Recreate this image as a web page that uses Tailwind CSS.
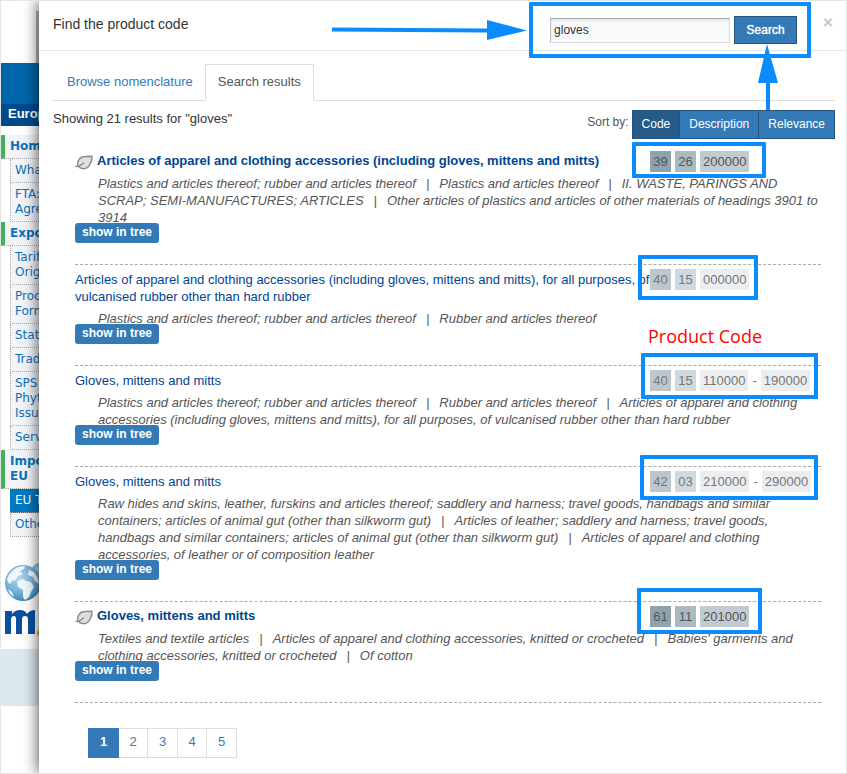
<!DOCTYPE html>
<html lang="en">
<head>
<meta charset="utf-8">
<title>Find the product code</title>
<script src="https://cdn.jsdelivr.net/npm/@tailwindcss/browser@4"></script>
</head>
<body class="bg-white font-['Liberation_Sans',Arial,sans-serif] text-[13px] leading-[17px] text-[#333]">
<div class="relative flex min-h-screen border border-[#e5e5e5] overflow-hidden">

  <!-- Site column behind the dialog -->
  <aside class="w-[38px] shrink-0 overflow-hidden whitespace-nowrap font-['DejaVu_Sans',Verdana,sans-serif] text-[12px] leading-[15px] text-[#0a72bb]">
    <div class="h-[62px] pt-[10px] flex justify-end"><div class="w-[3px] bg-[#bbb]"></div></div>
    <div class="h-[41px] bg-[#0065a8]"></div>
    <div class="h-[22px] bg-[#004a8c] pl-[7px] font-['Liberation_Sans',Arial,sans-serif] text-[13px] leading-[20px] font-bold text-white">Europ</div>
    <nav class="mt-[9px]">
      <a href="#" class="block border-l-4 border-l-[#43b05c] border-b border-b-[#aaa] [border-bottom-style:dotted] bg-[#f2f4f8] pl-[5px] py-1 font-bold">Hom</a>
      <div class="pl-[9px]">
        <a href="#" class="block border-l border-b border-dotted border-[#aaa] bg-[#f2f4f8] pl-1 py-1">Wha</a>
        <a href="#" class="block border-l border-b border-dotted border-[#aaa] bg-[#f2f4f8] pl-1 py-1">FTA:<br>Agre</a>
      </div>
      <a href="#" class="block border-l-4 border-l-[#43b05c] border-b border-b-[#aaa] [border-bottom-style:dotted] bg-[#f2f4f8] pl-[5px] py-1 font-bold">Expo</a>
      <div class="pl-[9px]">
        <a href="#" class="block border-l border-b border-dotted border-[#aaa] bg-[#f2f4f8] pl-1 py-1">Tarif<br>Orig</a>
        <a href="#" class="block border-l border-b border-dotted border-[#aaa] bg-[#f2f4f8] pl-1 py-1">Proc<br>Form</a>
        <a href="#" class="block border-l border-b border-dotted border-[#aaa] bg-[#f2f4f8] pl-1 py-1">Stat</a>
        <a href="#" class="block border-l border-b border-dotted border-[#aaa] bg-[#f2f4f8] pl-1 py-1">Trad</a>
        <a href="#" class="block border-l border-b border-dotted border-[#aaa] bg-[#f2f4f8] pl-1 py-1">SPS<br>Phyt<br>Issu</a>
        <a href="#" class="block border-l border-b border-dotted border-[#aaa] bg-[#f2f4f8] pl-1 py-1">Serv</a>
      </div>
      <a href="#" class="block border-l-4 border-l-[#43b05c] border-b border-b-[#aaa] [border-bottom-style:dotted] bg-[#f2f4f8] pl-[5px] py-1 font-bold">Impo<br>EU</a>
      <div class="pl-[9px]">
        <a href="#" class="block border-b border-dotted border-[#aaa] bg-[#0079c1] pl-[5px] py-1 text-white">EU T</a>
        <a href="#" class="block border-l border-b border-dotted border-[#aaa] bg-[#f2f4f8] pl-1 py-1">Othe</a>
      </div>
    </nav>
    <svg class="mt-[25px] block" width="38" height="76" viewBox="0 0 38 76" aria-label="Market access">
      <defs><radialGradient id="g" cx=".4" cy=".35" r=".7"><stop offset="0" stop-color="#b5d8ee"/><stop offset=".65" stop-color="#6daad4"/><stop offset="1" stop-color="#3f7fb0"/></radialGradient></defs>
      <circle cx="39" cy="10" r="9" fill="url(#g)"/>
      <circle cx="22" cy="21" r="18" fill="url(#g)"/>
      <path d="M6 17q3-8 11-12l7-1-1 3-4 2 3 3-5 2-2 4-4 1-2 3-2-2zM16 19l6-2 3 2 5 1 3 5-3 5-2 5-4 3-2-3 0-7-5-3zM28 8l5 2 4 6 1 6-4-3-2-4-5-2zM7 27l4 3 2 5-4-3z" fill="#eef7fc"/>
      <path d="M4 72V49h7v3q3-4 8-4 5 0 7 4 3-4 8-4V72h-7V57q0-3-3-3t-3 3v15h-6V57q0-3-2-3-3 0-3 4v14z" fill="#0b4ea2"/>
      <circle cx="39" cy="71" r="3" fill="#f39a1e"/>
    </svg>
    <div class="mt-[11px] h-[57px] bg-[#dce9ef]"></div>
  </aside>

  <main role="dialog" aria-labelledby="dlg" class="relative flex-1 bg-white shadow-[0_0_14px_1px_rgba(0,0,0,0.65)]">
    <header class="flex h-[50px] items-start border-b border-[#e5e5e5] pl-[14px] pr-[13px]">
      <h1 id="dlg" class="flex-1 pt-[14px] text-[14px] leading-[18px]">Find the product code</h1>
      <form class="flex items-center gap-1 pt-[15px]" onsubmit="return false">
        <input type="text" aria-label="Search term" value="gloves" class="h-[25px] w-[180px] border border-[#ddd] border-t-[#aaa] border-l-[#bbb] bg-[#f9fafc] px-[3px] text-[12px] shadow-[inset_0_2px_2px_rgba(190,205,220,0.4)]">
        <button class="h-[28px] w-[63px] border border-[#245580] bg-[#337ab7] text-[12px] text-white [text-shadow:0_0_1px_#fff]">Search</button>
      </form>
      <button aria-label="Close" class="ml-[26px] pt-[13px] text-[17px] leading-[17px] font-bold text-[#c4c4c4]">×</button>
    </header>

    <div class="pt-[13px] pl-[13px] pr-[11px]">
      <div class="flex border-b border-[#ddd]">
        <a href="#" class="h-[36px] pl-[15px] pr-3 pt-[9px] text-[#337ab7]">Browse nomenclature</a>
        <a href="#" class="-mb-px h-[37px] border border-[#ddd] border-b-white bg-white px-3 pt-[8px] text-[#555]">Search results</a>
      </div>

      <div class="mt-[9px] flex items-start">
        <p class="flex-1 pl-px">Showing 21 results for "gloves"</p>
        <span class="pt-1 pr-[3px] text-[12px] leading-[17px] text-[#555]">Sort by:</span>
        <div class="flex h-[29px] border border-[#245580] text-[12px] text-white [text-shadow:0_0_1px_#fff]">
          <button class="bg-[#265a88] px-[9px]">Code</button>
          <button class="border-l border-[#245580] bg-[#337ab7] px-[9px]">Description</button>
          <button class="border-l border-[#245580] bg-[#337ab7] px-[9px]">Relevance</button>
        </div>
      </div>

      <ul class="mt-2 pl-[23px] pr-[14px]">
        <li class="border-b border-dashed border-[#aaa] pt-1 pb-[21px]">
          <div class="flex items-start">
            <h2 class="flex flex-1 gap-1 pt-px pb-[5px] font-bold text-[#004494]">
              <svg class="mt-[3px] shrink-0" width="18" height="15" viewBox="0 0 18 15" fill="none" stroke="#8c8c8c" stroke-width="1.4" stroke-linejoin="round" stroke-linecap="round"><path d="M3 11C1.500 6 5 1.500 10 1.500L17 1.200C17 5 15.500 9.500 12.500 12.500C9.500 14.600 5.500 14 3 11Z" fill="#dedede"/><path d="M1 11.500L4.500 11L8.500 8"/></svg>
              <a href="#">Articles of apparel and clothing accessories (including gloves, mittens and mitts)</a></h2>
            <div class="flex w-[171px] gap-1 leading-[21px] text-[#555]"><span class="bg-[#8fa2ae] w-[21px] text-center">39</span><span class="bg-[#a9bac1] w-[21px] text-center">26</span><span class="bg-[#c2cbd1] px-[3px]">200000</span></div>
          </div>
          <p class="pl-[23px] italic text-[#555]">Plastics and articles thereof; rubber and articles thereof<span class="mx-2.5">|</span>Plastics and articles thereof<span class="mx-2.5">|</span>II. WASTE, PARINGS AND SCRAP; SEMI-MANUFACTURES; ARTICLES<span class="mx-2.5">|</span>Other articles of plastics and articles of other materials of headings 3901 to 3914</p>
          <button class="relative -mt-[3px] block h-[20px] w-[84px] rounded-[3px] bg-[#337ab7] pb-[2px] text-[12px] font-bold leading-[18px] text-white">show in tree</button>
        </li>
        <li class="border-b border-dashed border-[#aaa] pt-1 pb-[21px]">
          <div class="flex items-start">
            <h2 class="flex-1 pt-[2px] pb-[5px] text-[#004494]"><a href="#">Articles of apparel and clothing accessories (including gloves, mittens and mitts), for all purposes, of vulcanised rubber other than hard rubber</a></h2>
            <div class="flex w-[171px] gap-1 leading-[21px] text-[#777]"><span class="bg-[#bcc7cd] w-[21px] text-center">40</span><span class="bg-[#cfdae0] w-[21px] text-center">15</span><span class="bg-[#eaeef1] px-[3px]">000000</span></div>
          </div>
          <p class="pl-[23px] italic text-[#555]">Plastics and articles thereof; rubber and articles thereof<span class="mx-2.5">|</span>Rubber and articles thereof</p>
          <button class="relative -mt-[3px] block h-[20px] w-[84px] rounded-[3px] bg-[#337ab7] pb-[2px] text-[12px] font-bold leading-[18px] text-white">show in tree</button>
        </li>
        <li class="border-b border-dashed border-[#aaa] pt-1 pb-[21px]">
          <div class="flex items-start">
            <h2 class="flex-1 pt-[2px] pb-[5px] text-[#004494]"><a href="#">Gloves, mittens and mitts</a></h2>
            <div class="flex w-[171px] gap-1 leading-[21px] text-[#777]"><span class="bg-[#bcc7cd] w-[21px] text-center">40</span><span class="bg-[#cfdae0] w-[21px] text-center">15</span><span class="bg-[#eaeef1] px-[3px]">110000</span><span>-</span><span class="bg-[#eaeef1] px-[3px]">190000</span></div>
          </div>
          <p class="pl-[23px] italic text-[#555]">Plastics and articles thereof; rubber and articles thereof<span class="mx-2.5">|</span>Rubber and articles thereof<span class="mx-2.5">|</span>Articles of apparel and clothing accessories (including gloves, mittens and mitts), for all purposes, of vulcanised rubber other than hard rubber</p>
          <button class="relative -mt-[3px] block h-[20px] w-[84px] rounded-[3px] bg-[#337ab7] pb-[2px] text-[12px] font-bold leading-[18px] text-white">show in tree</button>
        </li>
        <li class="border-b border-dashed border-[#aaa] pt-1 pb-[21px]">
          <div class="flex items-start">
            <h2 class="flex-1 pt-[2px] pb-[5px] text-[#004494]"><a href="#">Gloves, mittens and mitts</a></h2>
            <div class="flex w-[171px] gap-1 leading-[21px] text-[#777]"><span class="bg-[#bcc7cd] w-[21px] text-center">42</span><span class="bg-[#cfdae0] w-[21px] text-center">03</span><span class="bg-[#eaeef1] px-[3px]">210000</span><span>-</span><span class="bg-[#eaeef1] px-[3px]">290000</span></div>
          </div>
          <p class="pl-[23px] italic text-[#555]">Raw hides and skins, leather, furskins and articles thereof; saddlery and harness; travel goods, handbags and similar containers; articles of animal gut (other than silkworm gut)<span class="mx-2.5">|</span>Articles of leather; saddlery and harness; travel goods, handbags and similar containers; articles of animal gut (other than silkworm gut)<span class="mx-2.5">|</span>Articles of apparel and clothing accessories, of leather or of composition leather</p>
          <button class="relative -mt-[3px] block h-[20px] w-[84px] rounded-[3px] bg-[#337ab7] pb-[2px] text-[12px] font-bold leading-[18px] text-white">show in tree</button>
        </li>
        <li class="border-b border-dashed border-[#aaa] pt-1 pb-[21px]">
          <div class="flex items-start">
            <h2 class="flex flex-1 gap-1 pt-px pb-[5px] font-bold text-[#004494]">
              <svg class="mt-[3px] shrink-0" width="18" height="15" viewBox="0 0 18 15" fill="none" stroke="#8c8c8c" stroke-width="1.4" stroke-linejoin="round" stroke-linecap="round"><path d="M3 11C1.500 6 5 1.500 10 1.500L17 1.200C17 5 15.500 9.500 12.500 12.500C9.500 14.600 5.500 14 3 11Z" fill="#dedede"/><path d="M1 11.500L4.500 11L8.500 8"/></svg>
              <a href="#">Gloves, mittens and mitts</a></h2>
            <div class="flex w-[171px] gap-1 leading-[21px] text-[#555]"><span class="bg-[#8fa2ae] w-[21px] text-center">61</span><span class="bg-[#a9bac1] w-[21px] text-center">11</span><span class="bg-[#c2cbd1] px-[3px]">201000</span></div>
          </div>
          <p class="pl-[23px] italic text-[#555]">Textiles and textile articles<span class="mx-2.5">|</span>Articles of apparel and clothing accessories, knitted or crocheted<span class="mx-2.5">|</span>Babies' garments and clothing accessories, knitted or crocheted<span class="mx-2.5">|</span>Of cotton</p>
          <button class="relative -mt-[3px] block h-[20px] w-[84px] rounded-[3px] bg-[#337ab7] pb-[2px] text-[12px] font-bold leading-[18px] text-white">show in tree</button>
        </li>
      </ul>

      <nav aria-label="Pages" class="mt-[25px] ml-[36px] flex text-center leading-[26px] text-[#337ab7]">
        <a href="#" class="h-[30px] w-[31px] border border-[#337ab7] bg-[#337ab7] font-bold text-white">1</a>
        <a href="#" class="h-[30px] w-[29px] border border-l-0 border-[#ddd]">2</a>
        <a href="#" class="h-[30px] w-[30px] border border-l-0 border-[#ddd]">3</a>
        <a href="#" class="h-[30px] w-[29px] border border-l-0 border-[#ddd]">4</a>
        <a href="#" class="h-[30px] w-[30px] border border-l-0 border-[#ddd]">5</a>
      </nav>
    </div>
  </main>

  <!-- Callouts drawn over the dialog, anchored to its right edge -->
  <div class="pointer-events-none absolute inset-y-0 right-0 w-[515px]">
    <svg class="absolute left-0 top-[18px]" width="200" height="22" viewBox="0 0 200 22" fill="#0a8cff"><path d="M1 8.500L156 9.500V1L196 11.500L156 21V13.500L1 12.500Z"/></svg>
    <svg class="absolute left-[426px] top-[42px]" width="22" height="68" viewBox="0 0 22 68" fill="#0a8cff"><path d="M10 1L21 40H13V67H9V40H1Z"/></svg>
    <div class="absolute left-[198px] top-[1px] h-[56px] w-[282px] rounded-[1px] border-4 border-[#0a8cff]"></div>
    <div class="absolute left-[301px] top-[141px] h-[36px] w-[134px] rounded-[1px] border-4 border-[#0a8cff]"></div>
    <div class="absolute left-[307px] top-[254px] h-[45px] w-[120px] rounded-[1px] border-4 border-[#0a8cff]"></div>
    <div class="absolute left-[317px] top-[323px] font-['Open_Sans','Noto_Sans',sans-serif] text-[18px] leading-[24px] text-[#f00]">Product Code</div>
    <div class="absolute left-[310px] top-[352px] h-[46px] w-[177px] rounded-[1px] border-4 border-[#0a8cff]"></div>
    <div class="absolute left-[309px] top-[454px] h-[45px] w-[178px] rounded-[1px] border-4 border-[#0a8cff]"></div>
    <div class="absolute left-[306px] top-[587px] h-[46px] w-[125px] rounded-[1px] border-4 border-[#0a8cff]"></div>
  </div>
</div>
</body>
</html>
